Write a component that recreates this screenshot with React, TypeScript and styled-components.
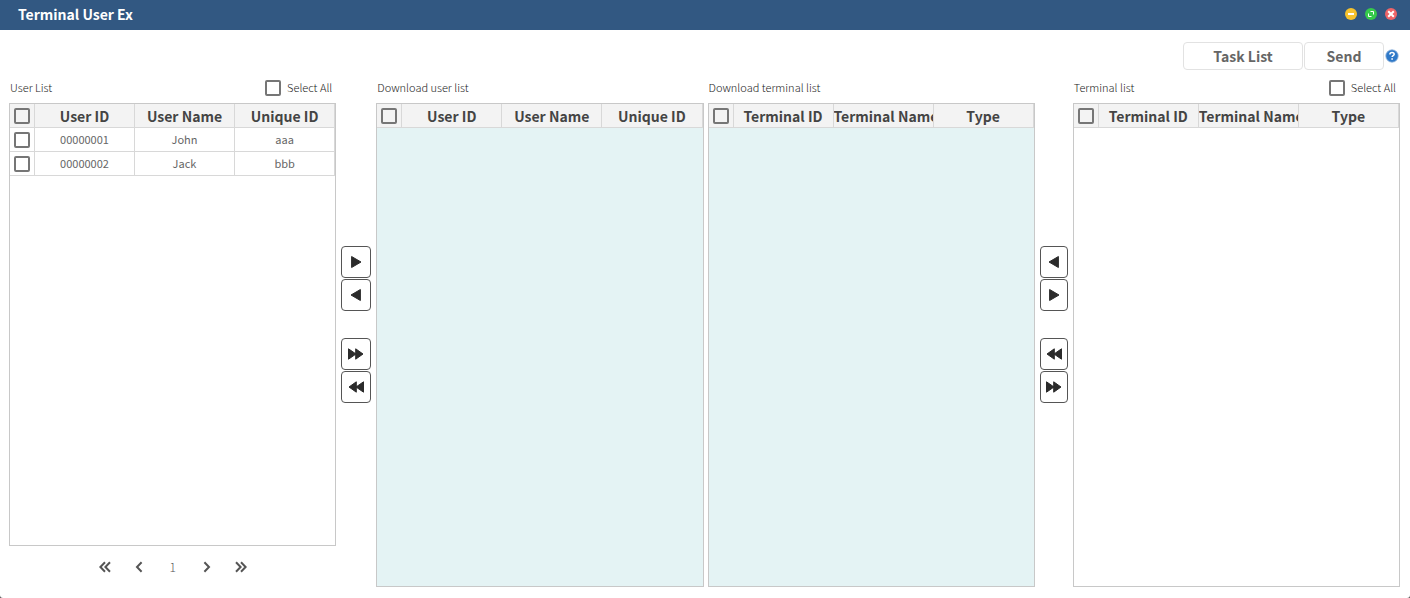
import React, { useState } from "react";
import styled, { createGlobalStyle } from "styled-components";

const GlobalStyle = createGlobalStyle`
  *, *::before, *::after { box-sizing: border-box; }
  html { background: #555; }
  body {
    margin: 0;
    font-family: "Noto Sans CJK KR", "Noto Sans", sans-serif;
    font-size: 11px;
    line-height: 20px;
    color: #1c1c1c;
  }
  button, input { font: inherit; color: inherit; }
`;

const Window = styled.div`
  display: flex;
  flex-direction: column;
  min-height: 100vh;
  background: #fff;
  border-radius: 0 0 3px 3px;
`;

const TitleBar = styled.header`
  display: flex;
  align-items: center;
  justify-content: space-between;
  height: 30px;
  padding: 0 13px 2px 18px;
  background: #325882;
  color: #fff;
`;

const Title = styled.h1`
  margin: 0;
  font-size: 14px;
  line-height: 20px;
  font-weight: 700;
`;

const WindowControls = styled.div`
  display: flex;
  gap: 8px;
`;

const Dot = styled.button<{ $color: string }>`
  display: flex;
  width: 12px;
  height: 12px;
  padding: 0;
  border: 0;
  border-radius: 50%;
  background: ${(p) => p.$color};
  cursor: pointer;
`;

const Toolbar = styled.div`
  display: flex;
  justify-content: flex-end;
  align-items: center;
  gap: 1px;
  padding: 12px 11px 0 9px;
`;

const ActionButton = styled.button<{ $wide?: boolean }>`
  width: ${(p) => (p.$wide ? 120 : 80)}px;
  height: 28px;
  padding: 0;
  border: 1px solid #e2e2e2;
  border-radius: 4px;
  background: #fff;
  color: #666;
  font-size: 14px;
  font-weight: 700;
  line-height: 24px;
  cursor: pointer;
`;

const HelpButton = styled.button`
  display: flex;
  width: 14px;
  height: 14px;
  padding: 0;
  border: 0;
  background: none;
  cursor: pointer;
`;

const Board = styled.main`
  flex: 1;
  display: grid;
  grid-template-columns: minmax(0, 1fr) 40px minmax(0, 1fr) 4px minmax(0, 1fr) 38px minmax(0, 1fr);
  padding: 8px 10px 11px 9px;
`;

const Panel = styled.section`
  display: flex;
  flex-direction: column;
`;

const PanelHead = styled.div`
  display: flex;
  align-items: center;
  justify-content: space-between;
  height: 20px;
  margin-bottom: 5px;
  padding: 0 4px 0 1px;
`;

const PanelTitle = styled.h2`
  margin: 0;
  padding-bottom: 2px;
  font-size: 11px;
  line-height: 18px;
  font-weight: 300;
`;

const SelectAll = styled.label`
  display: flex;
  align-items: center;
  gap: 6px;
  font-weight: 300;
`;

const SelectAllText = styled.span`
  padding-bottom: 2px;
  line-height: 18px;
`;

const Check = styled.input.attrs({ type: "checkbox" })`
  appearance: none;
  display: block;
  flex: none;
  width: 16px;
  height: 16px;
  margin: 0;
  border: 2px solid #767676;
  border-radius: 2px;
  background: transparent;
  &:checked { background: #767676; }
`;

const ListBox = styled.div<{ $tinted?: boolean }>`
  flex: 1;
  border: 1px solid #c8c8c8;
  background: ${(p) => (p.$tinted ? "#e4f3f4" : "#fff")};
`;

const Table = styled.table`
  width: 100%;
  table-layout: fixed;
  border-collapse: separate;
  border-spacing: 0;
`;

const HeadCell = styled.th`
  height: 24px;
  padding: 0;
  overflow: hidden;
  white-space: nowrap;
  border: solid #d8d8d8;
  border-width: 0 1px 1px 0;
  background: #f3f3f3;
  color: #444;
  font-size: 14px;
  font-weight: 700;
`;

const ColumnHead = styled(HeadCell)`
  padding-top: 2px;
  line-height: 21px;
`;

const Cell = styled.td`
  height: 24px;
  padding: 0;
  border: solid #d8d8d8;
  border-width: 0 1px 1px 0;
  color: #666;
  font-size: 11px;
  line-height: 23px;
  text-align: center;
`;

const CheckWrap = styled.div`
  display: flex;
  justify-content: center;
`;

const CheckCol = styled.col`
  width: 25px;
`;

const DataCol = styled.col`
  width: 100px;
`;

const Movers = styled.div`
  display: flex;
  flex-direction: column;
  gap: 27px;
  padding: 168px 5px 0;
`;

const MoverGroup = styled.div`
  display: flex;
  flex-direction: column;
  gap: 1px;
`;

const MoveButton = styled.button`
  display: flex;
  align-items: center;
  justify-content: center;
  width: 100%;
  height: 32px;
  padding: 0;
  border: 1px solid #555;
  border-radius: 4px;
  background: #fff;
  color: #2b2b2b;
  cursor: pointer;
`;

const Pager = styled.nav`
  display: flex;
  justify-content: center;
  height: 41px;
`;

const PageButton = styled.button`
  display: flex;
  align-items: center;
  justify-content: center;
  width: 34px;
  padding: 0;
  border: 0;
  background: none;
  color: #555;
  font-size: 12px;
  font-weight: 300;
  line-height: 20px;
  cursor: pointer;
`;

type Direction = "left" | "right";

function ArrowIcon({ dir, double }: { dir: Direction; double?: boolean }) {
  return (
    <svg
      width="18"
      height="14"
      viewBox="0 0 18 14"
      fill="currentColor"
      stroke="currentColor"
      strokeLinejoin="round"
      aria-hidden="true"
    >
      <g transform={dir === "left" ? "translate(18 0) scale(-1 1)" : undefined}>
        {double ? (
          <path d="M1.5 1.8 9 7l-7.5 5.2zM8.7 1.8 16 7l-7.3 5.2z" />
        ) : (
          <path d="M4.6 1.5 14 7l-9.4 5.5z" />
        )}
      </g>
    </svg>
  );
}

function ChevronIcon({ dir, double }: { dir: Direction; double?: boolean }) {
  return (
    <svg
      width="14"
      height="12"
      viewBox="0 0 14 12"
      fill="none"
      stroke="currentColor"
      strokeWidth="2"
      aria-hidden="true"
    >
      <g transform={dir === "right" ? "translate(14 0) scale(-1 1)" : undefined}>
        <path d={double ? "M7 1.3 2.4 6 7 10.7M12 1.3 7.4 6l4.6 4.7" : "M9.6 1.3 5 6l4.6 4.7"} />
      </g>
    </svg>
  );
}

interface ListTableProps {
  name: string;
  columns: string[];
  rows?: string[][];
}

function ListTable({ name, columns, rows = [] }: ListTableProps) {
  return (
    <Table aria-label={name}>
      <colgroup>
        <CheckCol />
        <DataCol />
        <DataCol />
        <col />
      </colgroup>
      <thead>
        <tr>
          <HeadCell>
            <CheckWrap>
              <Check aria-label={`Select every row of ${name}`} />
            </CheckWrap>
          </HeadCell>
          {columns.map((c) => (
            <ColumnHead key={c} scope="col">
              {c}
            </ColumnHead>
          ))}
        </tr>
      </thead>
      <tbody>
        {rows.map((row) => (
          <tr key={row[0]}>
            <Cell>
              <CheckWrap>
                <Check aria-label={`Select ${row[0]}`} />
              </CheckWrap>
            </Cell>
            {row.map((value) => (
              <Cell key={value}>{value}</Cell>
            ))}
          </tr>
        ))}
      </tbody>
    </Table>
  );
}

function MoverColumn({ inward, outward }: { inward: Direction; outward: Direction }) {
  return (
    <Movers>
      <MoverGroup>
        <MoveButton aria-label="Add selected">
          <ArrowIcon dir={inward} />
        </MoveButton>
        <MoveButton aria-label="Remove selected">
          <ArrowIcon dir={outward} />
        </MoveButton>
      </MoverGroup>
      <MoverGroup>
        <MoveButton aria-label="Add all">
          <ArrowIcon dir={inward} double />
        </MoveButton>
        <MoveButton aria-label="Remove all">
          <ArrowIcon dir={outward} double />
        </MoveButton>
      </MoverGroup>
    </Movers>
  );
}

const userColumns = ["User ID", "User Name", "Unique ID"];
const terminalColumns = ["Terminal ID", "Terminal Name", "Type"];
const users = [
  ["00000001", "John", "aaa"],
  ["00000002", "Jack", "bbb"],
];

export default function App() {
  const [allUsers, setAllUsers] = useState(false);
  const [allTerminals, setAllTerminals] = useState(false);

  return (
    <>
      <GlobalStyle />
      <Window>
        <TitleBar>
          <Title>Terminal User Ex</Title>
          <WindowControls>
            <Dot $color="#f6c22d" aria-label="Minimize">
              <svg width="12" height="12" viewBox="0 0 12 12" stroke="#fff" strokeWidth="2">
                <path d="M3 6h6" />
              </svg>
            </Dot>
            <Dot $color="#35cb4b" aria-label="Maximize">
              <svg width="12" height="12" viewBox="0 0 12 12" fill="none" stroke="#fff">
                <path d="M5.5 3.5h3v3M3.5 5.5v3h3" />
              </svg>
            </Dot>
            <Dot $color="#ee6468" aria-label="Close">
              <svg width="12" height="12" viewBox="0 0 12 12" stroke="#fff" strokeWidth="2">
                <path d="m3.2 3.2 5.6 5.6M8.8 3.2 3.2 8.8" />
              </svg>
            </Dot>
          </WindowControls>
        </TitleBar>

        <Toolbar>
          <ActionButton $wide>Task List</ActionButton>
          <ActionButton>Send</ActionButton>
          <HelpButton aria-label="Help">
            <svg width="14" height="14" viewBox="0 0 14 14" fill="none">
              <circle cx="7" cy="7" r="6.2" fill="#2f79c8" stroke="#8fb3da" strokeWidth=".8" />
              <path
                d="M4.9 5.4c0-1.3.9-2 2.1-2s2.2.7 2.2 1.8c0 1.4-2.1 1.5-2.1 2.9"
                stroke="#fff"
                strokeWidth="1.5"
              />
              <path d="M6.3 9.2h1.6v1.5H6.3z" fill="#fff" />
            </svg>
          </HelpButton>
        </Toolbar>

        <Board>
          <Panel>
            <PanelHead>
              <PanelTitle>User List</PanelTitle>
              <SelectAll>
                <Check checked={allUsers} onChange={(e) => setAllUsers(e.target.checked)} />
                <SelectAllText>Select All</SelectAllText>
              </SelectAll>
            </PanelHead>
            <ListBox>
              <ListTable name="User List" columns={userColumns} rows={users} />
            </ListBox>
            <Pager aria-label="User pages">
              <PageButton aria-label="First page">
                <ChevronIcon dir="left" double />
              </PageButton>
              <PageButton aria-label="Previous page">
                <ChevronIcon dir="left" />
              </PageButton>
              <PageButton aria-current="page">1</PageButton>
              <PageButton aria-label="Next page">
                <ChevronIcon dir="right" />
              </PageButton>
              <PageButton aria-label="Last page">
                <ChevronIcon dir="right" double />
              </PageButton>
            </Pager>
          </Panel>

          <MoverColumn inward="right" outward="left" />

          <Panel>
            <PanelHead>
              <PanelTitle>Download user list</PanelTitle>
            </PanelHead>
            <ListBox $tinted>
              <ListTable name="Download user list" columns={userColumns} />
            </ListBox>
          </Panel>

          <div />

          <Panel>
            <PanelHead>
              <PanelTitle>Download terminal list</PanelTitle>
            </PanelHead>
            <ListBox $tinted>
              <ListTable name="Download terminal list" columns={terminalColumns} />
            </ListBox>
          </Panel>

          <MoverColumn inward="left" outward="right" />

          <Panel>
            <PanelHead>
              <PanelTitle>Terminal list</PanelTitle>
              <SelectAll>
                <Check checked={allTerminals} onChange={(e) => setAllTerminals(e.target.checked)} />
                <SelectAllText>Select All</SelectAllText>
              </SelectAll>
            </PanelHead>
            <ListBox>
              <ListTable name="Terminal list" columns={terminalColumns} />
            </ListBox>
          </Panel>
        </Board>
      </Window>
    </>
  );
}
